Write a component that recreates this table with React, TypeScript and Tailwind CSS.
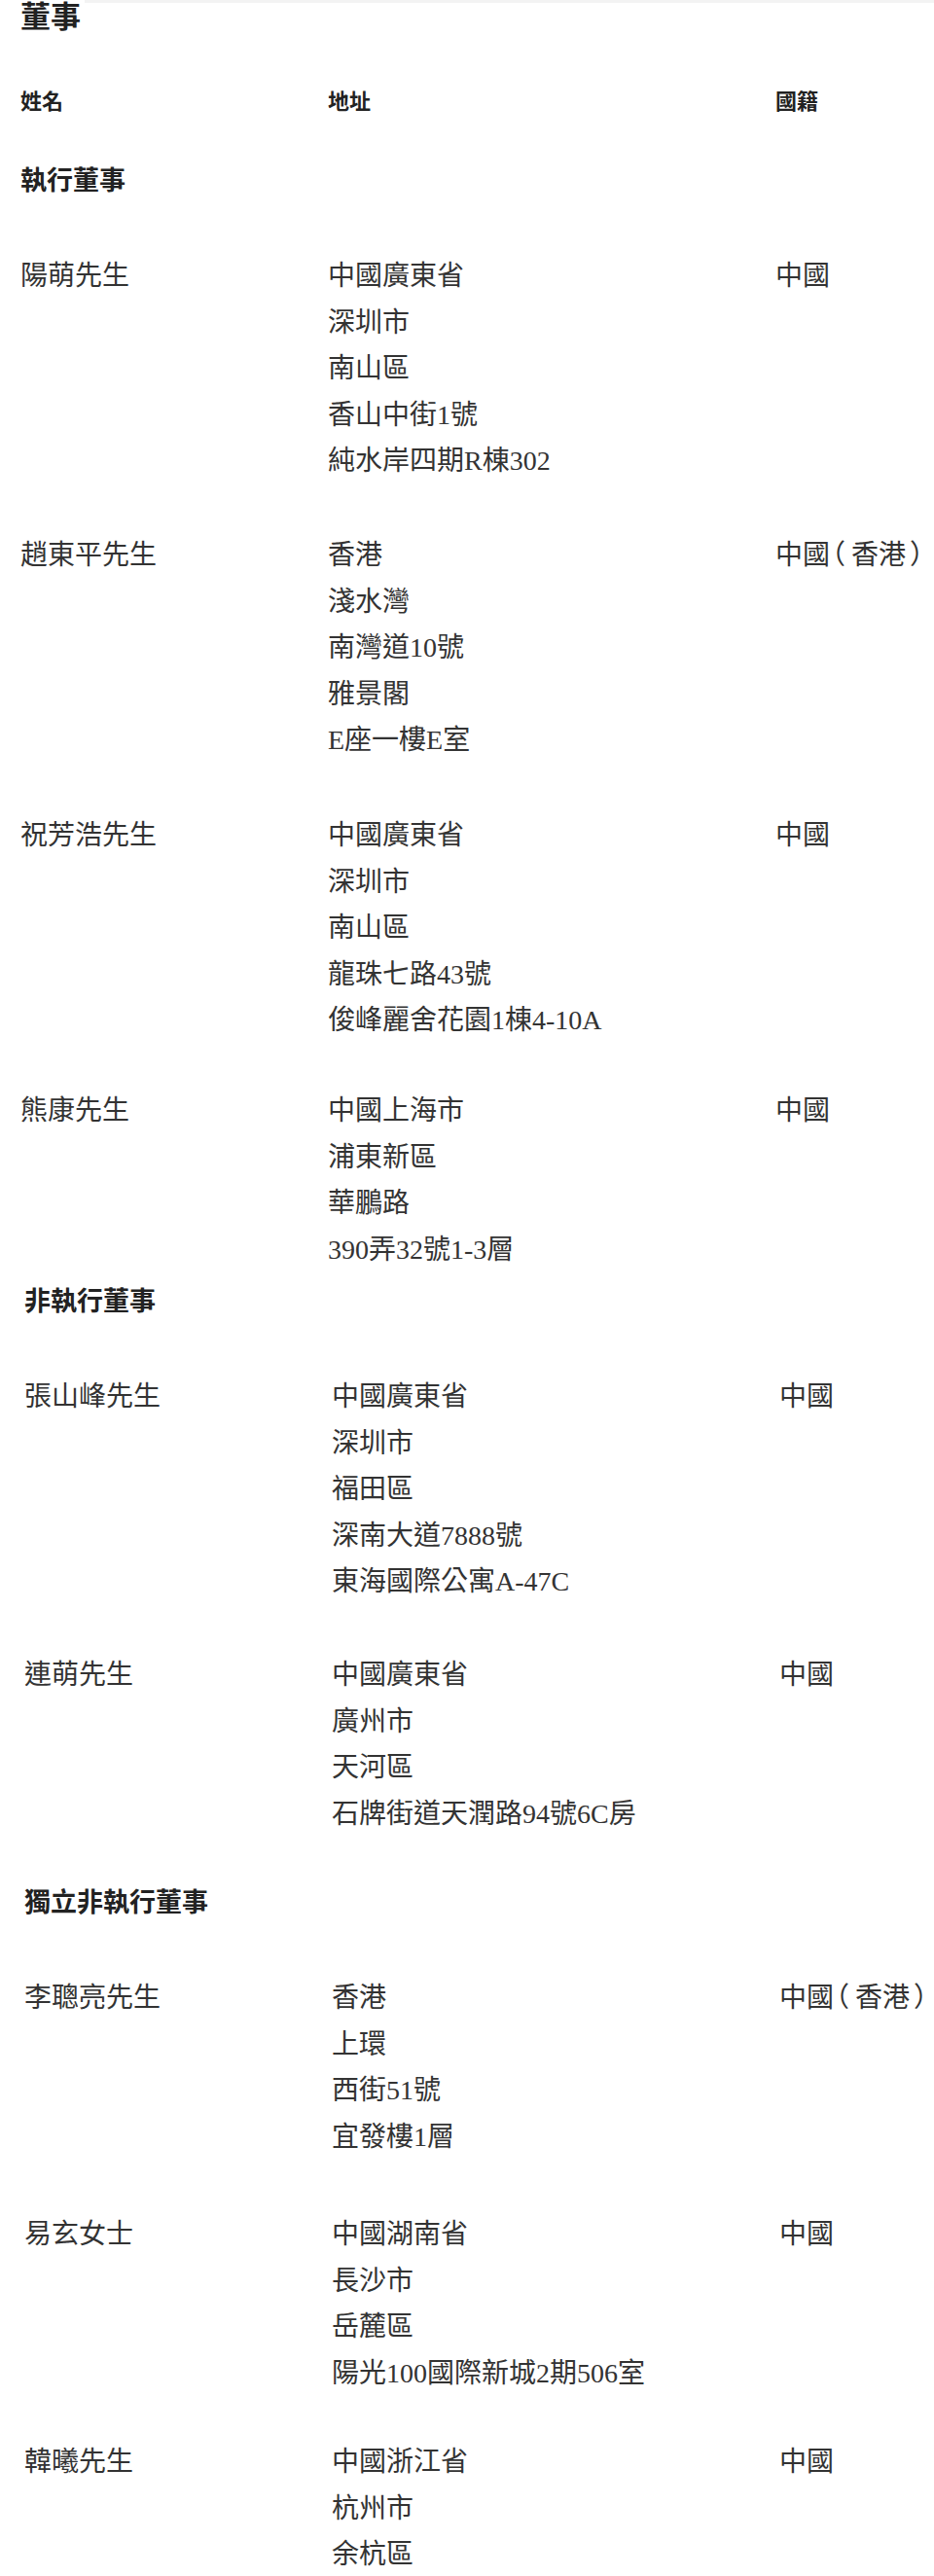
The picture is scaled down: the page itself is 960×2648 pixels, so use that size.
import * as React from 'react';

type Director = {
  name: string;
  address: string[];
  nationality: string;
  gap: string;
};

const executive: Director[] = [
  {
    name: '陽萌先生',
    address: ['中國廣東省', '深圳市', '南山區', '香山中街1號', '純水岸四期R棟302'],
    nationality: '中國',
    gap: 'mt-[56px]',
  },
  {
    name: '趙東平先生',
    address: ['香港', '淺水灣', '南灣道10號', '雅景閣', 'E座一樓E室'],
    nationality: '中國（香港）',
    gap: 'mt-[49.5px]',
  },
  {
    name: '祝芳浩先生',
    address: ['中國廣東省', '深圳市', '南山區', '龍珠七路43號', '俊峰麗舍花園1棟4-10A'],
    nationality: '中國',
    gap: 'mt-[50.5px]',
  },
  {
    name: '熊康先生',
    address: ['中國上海市', '浦東新區', '華鵬路', '390弄32號1-3層'],
    nationality: '中國',
    gap: 'mt-[45.5px]',
  },
];

const nonExecutive: Director[] = [
  {
    name: '張山峰先生',
    address: ['中國廣東省', '深圳市', '福田區', '深南大道7888號', '東海國際公寓A-47C'],
    nationality: '中國',
    gap: 'mt-[56px]',
  },
  {
    name: '連萌先生',
    address: ['中國廣東省', '廣州市', '天河區', '石牌街道天潤路94號6C房'],
    nationality: '中國',
    gap: 'mt-[48.5px]',
  },
];

const independent: Director[] = [
  {
    name: '李聰亮先生',
    address: ['香港', '上環', '西街51號', '宜發樓1層'],
    nationality: '中國（香港）',
    gap: 'mt-[56px]',
  },
  {
    name: '易玄女士',
    address: ['中國湖南省', '長沙市', '岳麓區', '陽光100國際新城2期506室'],
    nationality: '中國',
    gap: 'mt-[53px]',
  },
  {
    name: '韓曦先生',
    address: ['中國浙江省', '杭州市', '余杭區'],
    nationality: '中國',
    gap: 'mt-[44px]',
  },
];

// brackets are set half-width in the source, with a little air around them
const Nationality = ({ text }: { text: string }) => (
  <div className="whitespace-nowrap">
    {text.split('').map((ch, i) =>
      ch === '（' ? (
        <span key={i} className="ml-[2px] mr-[6px] [font-feature-settings:'halt']">
          {ch}
        </span>
      ) : ch === '）' ? (
        <span key={i} className="ml-[4px] [font-feature-settings:'halt']">
          {ch}
        </span>
      ) : (
        <span key={i}>{ch}</span>
      ),
    )}
  </div>
);

const DirectorRow = ({ d }: { d: Director }) => (
  <div className={`grid grid-cols-[316px_460px_1fr] ${d.gap}`}>
    <div>{d.name}</div>
    <div>
      {d.address.map((line) => (
        <div key={line}>{line}</div>
      ))}
    </div>
    <Nationality text={d.nationality} />
  </div>
);

const SectionTitle = ({ children, className }: { children: React.ReactNode; className: string }) => (
  <h3 className={`font-['Noto_Sans_CJK_TC',sans-serif] text-[27px] leading-[40px] font-bold text-[#222] ${className}`}>
    {children}
  </h3>
);

export default function App() {
  return (
    <div className="w-[960px] h-[2648px] overflow-hidden bg-white text-[#333]">
      <div className="flex items-start pl-[21px] mt-[-3px]">
        <h2 className="font-['Noto_Sans_CJK_TC',sans-serif] text-[31px] leading-[36px] font-bold text-[#222]">董事</h2>
        <div className="flex-1 h-[3px] mt-[3px] ml-[4px] bg-[#f3f3f3]" />
      </div>

      <div className="pl-[21px]">
        <div className="grid grid-cols-[316px_460px_1fr] mt-[53px] font-['Noto_Sans_CJK_TC',sans-serif] text-[22px] leading-[32px] font-bold text-[#222]">
          <div>姓名</div>
          <div>地址</div>
          <div>國籍</div>
        </div>

        <SectionTitle className="mt-[46px]">執行董事</SectionTitle>

        <div className="font-['Liberation_Serif','Noto_Sans_CJK_TC',serif] text-[28px] leading-[47.5px]">
          {executive.map((d) => (
            <DirectorRow key={d.name} d={d} />
          ))}
        </div>
      </div>

      <div className="pl-[25px]">
        <SectionTitle className="mt-[8px]">非執行董事</SectionTitle>
        <div className="font-['Liberation_Serif','Noto_Sans_CJK_TC',serif] text-[28px] leading-[47.5px]">
          {nonExecutive.map((d) => (
            <DirectorRow key={d.name} d={d} />
          ))}
        </div>

        <SectionTitle className="mt-[46px]">獨立非執行董事</SectionTitle>
        <div className="font-['Liberation_Serif','Noto_Sans_CJK_TC',serif] text-[28px] leading-[47.5px]">
          {independent.map((d) => (
            <DirectorRow key={d.name} d={d} />
          ))}
        </div>
      </div>
    </div>
  );
}
